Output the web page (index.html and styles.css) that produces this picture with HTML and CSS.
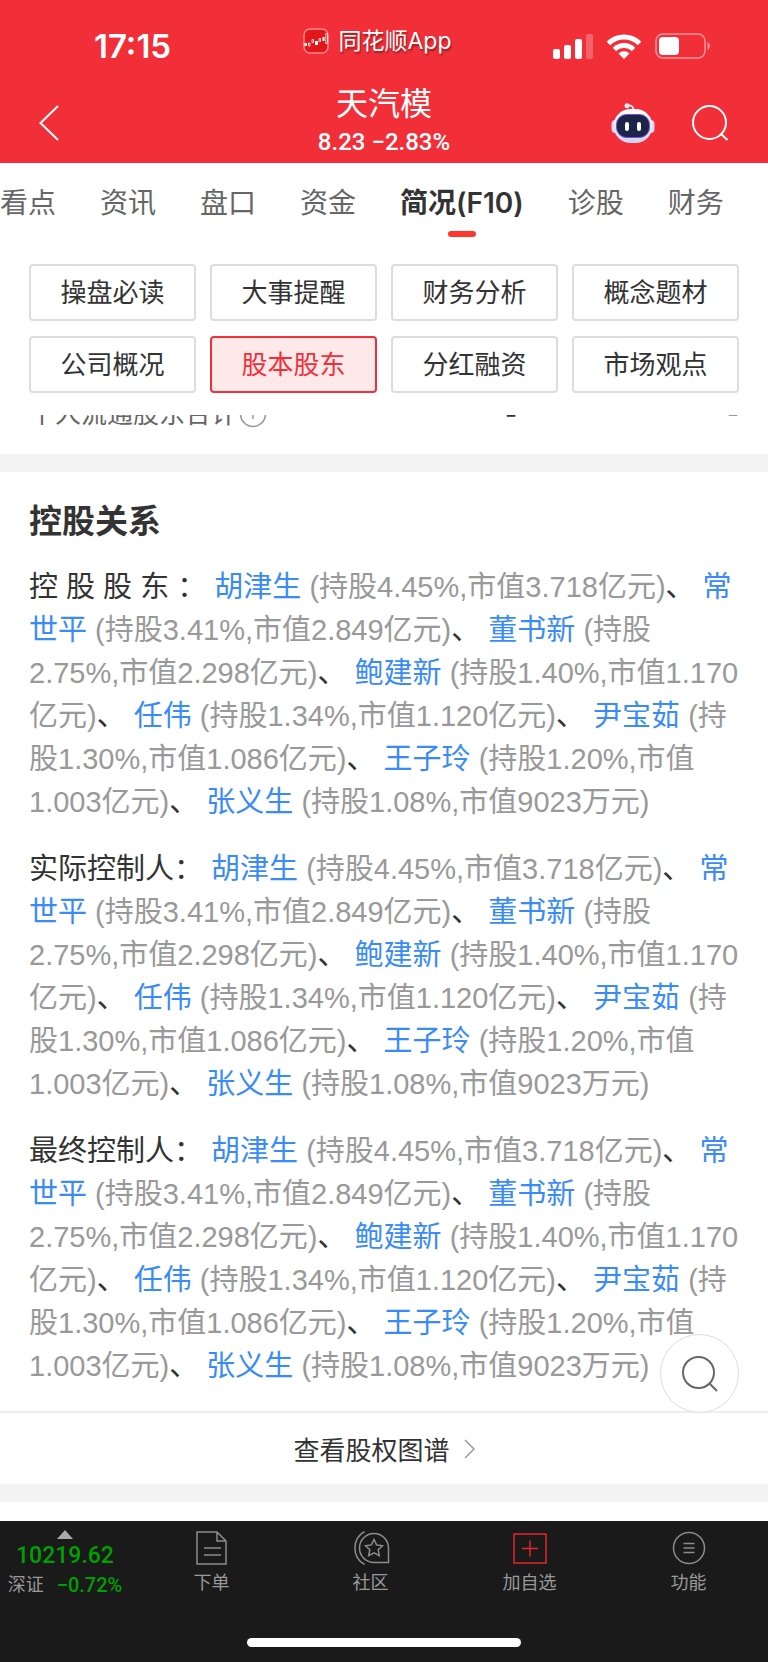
FILE: index.html
```
<!DOCTYPE html>
<html lang="zh-CN">
<head>
  <meta charset="UTF-8" />
  <meta name="viewport" content="width=device-width, initial-scale=1.0" />
  <title>天汽模 - 简况(F10)</title>
  <link rel="stylesheet" href="styles.css">
</head>
<body>
  <header class="header">
    <div class="status-bar">
      <span class="time">17:15</span>
      <div class="app-name">
        <svg class="app-logo" width="26" height="26" viewBox="0 0 26 26">
          <rect x="1" y="1" width="24" height="24" rx="6" fill="#e3171b" stroke="#f98a8c" stroke-width="1.5" />
          <path d="M1.5 15h2.5v3h-2.5zM12 13h3v4h-3zM19.5 9h2v4h-2z" fill="#fff" />
          <path d="M5.5 15h1.5v3h-1.5zM9 11.5h1.5v3h-1.5zM16 10.5h1.5v3h-1.5zM22.8 5.5h1.7v10h-1.7z" fill="none" stroke="#fff" stroke-width=".8" />
        </svg>
        <span>同花顺App</span>
      </div>
      <div class="status-icons">
        <svg width="40" height="26" viewBox="0 0 40 26" fill="#fff">
          <rect x="0" y="16" width="7" height="10" rx="2" />
          <rect x="11" y="12" width="7" height="14" rx="2" />
          <rect x="22" y="6" width="7" height="20" rx="2" />
          <rect x="33" y="1" width="7" height="25" rx="2" opacity=".25" />
        </svg>
        <svg width="36" height="26" viewBox="0 0 36 26" fill="none" stroke="#fff" stroke-width="5">
          <path d="M2.5 10.5a22 22 0 0 1 31 0" />
          <path d="M8.5 16.5a13.5 13.5 0 0 1 19 0" />
          <path d="M18 26l-5.5-5.5a7.8 7.8 0 0 1 11 0z" fill="#fff" stroke="none" />
        </svg>
        <svg width="56" height="26" viewBox="0 0 56 26">
          <rect x="1" y="1" width="49" height="24" rx="7" fill="none" stroke="#fff" stroke-width="1.5" opacity=".5" />
          <rect x="4" y="4" width="20" height="18" rx="4" fill="#fff" />
          <path d="M52.5 9a4.5 4.5 0 0 1 0 8z" fill="#fff" opacity=".5" />
        </svg>
      </div>
    </div>
    <div class="title-bar">
      <button class="icon-btn back" aria-label="返回">
        <svg width="20" height="36" viewBox="0 0 20 36" fill="none" stroke="#fff" stroke-width="2">
          <path d="M19 1L1.5 18 19 35" />
        </svg>
      </button>
      <div class="stock">
        <h1>天汽模</h1>
        <p class="quote">8.23 −2.83%</p>
      </div>
      <div class="title-actions">
        <button class="icon-btn" aria-label="智能助手">
          <svg width="44" height="40" viewBox="0 0 44 40">
            <defs>
              <linearGradient id="shell" x1="0" y1="0" x2="0" y2="1">
                <stop offset="0" stop-color="#fff" />
                <stop offset="1" stop-color="#d4d0f2" />
              </linearGradient>
            </defs>
            <path d="M16 2.5q6-1 6.5 4" fill="none" stroke="#f5e9f5" stroke-width="1.8" />
            <circle cx="16" cy="2.8" r="2.5" fill="#f0e8f8" />
            <rect x="0.5" y="17" width="8" height="13" rx="4" fill="#dcd7f3" />
            <rect x="35.5" y="17" width="8" height="13" rx="4" fill="#dcd7f3" />
            <rect x="2.5" y="6" width="39" height="34" rx="17" fill="url(#shell)" />
            <rect x="5.5" y="11.5" width="33" height="23" rx="10" fill="#1c2448" stroke="#6a55d8" stroke-width="1" />
            <rect x="14" y="19" width="4" height="9" rx="2" fill="#fff" />
            <rect x="26" y="19" width="4" height="9" rx="2" fill="#fff" />
          </svg>
        </button>
        <button class="icon-btn" aria-label="搜索">
          <svg width="38" height="38" viewBox="0 0 38 38" fill="none" stroke="#fff" stroke-width="2">
            <circle cx="18.5" cy="18.5" r="16.5" />
            <path d="M29.5 29.5l7 6.5" />
          </svg>
        </button>
      </div>
    </div>
  </header>

  <nav class="tabs">
    <a href="#">看点</a>
    <a href="#">资讯</a>
    <a href="#">盘口</a>
    <a href="#">资金</a>
    <a href="#" class="active">简况(F10)</a>
    <a href="#">诊股</a>
    <a href="#">财务</a>
  </nav>

  <div class="filters">
    <button>操盘必读</button>
    <button>大事提醒</button>
    <button>财务分析</button>
    <button>概念题材</button>
    <button>公司概况</button>
    <button class="selected">股本股东</button>
    <button>分红融资</button>
    <button>市场观点</button>
  </div>

  <main>
    <!-- last row of the table above, scrolled under the filters -->
    <div class="scrolled">
      <div class="holder-row">
        <span class="holder-name">个人流通股东合计
          <svg width="28" height="28" viewBox="0 0 28 28" fill="none" stroke="#999" stroke-width="1.5">
            <circle cx="14" cy="14" r="12.5" />
            <path d="M14 7v2M14 11v8" />
          </svg>
        </span>
        <span class="holder-count">-</span>
        <span class="holder-ratio">-</span>
      </div>
    </div>

    <section class="relation">
      <h2>控股关系</h2>
      <p>控 股 股 东 ： <a href="#">胡津生</a> <span>(持股4.45%,市值3.718亿元)</span>、 <a href="#">常世平</a> <span>(持股3.41%,市值2.849亿元)</span>、 <a href="#">董书新</a> <span>(持股2.75%,市值2.298亿元)</span>、 <a href="#">鲍建新</a> <span>(持股1.40%,市值1.170亿元)</span>、 <a href="#">任伟</a> <span>(持股1.34%,市值1.120亿元)</span>、 <a href="#">尹宝茹</a> <span>(持股1.30%,市值1.086亿元)</span>、 <a href="#">王子玲</a> <span>(持股1.20%,市值1.003亿元)</span>、 <a href="#">张义生</a> <span>(持股1.08%,市值9023万元)</span></p>
      <p>实际控制人： <a href="#">胡津生</a> <span>(持股4.45%,市值3.718亿元)</span>、 <a href="#">常世平</a> <span>(持股3.41%,市值2.849亿元)</span>、 <a href="#">董书新</a> <span>(持股2.75%,市值2.298亿元)</span>、 <a href="#">鲍建新</a> <span>(持股1.40%,市值1.170亿元)</span>、 <a href="#">任伟</a> <span>(持股1.34%,市值1.120亿元)</span>、 <a href="#">尹宝茹</a> <span>(持股1.30%,市值1.086亿元)</span>、 <a href="#">王子玲</a> <span>(持股1.20%,市值1.003亿元)</span>、 <a href="#">张义生</a> <span>(持股1.08%,市值9023万元)</span></p>
      <p>最终控制人： <a href="#">胡津生</a> <span>(持股4.45%,市值3.718亿元)</span>、 <a href="#">常世平</a> <span>(持股3.41%,市值2.849亿元)</span>、 <a href="#">董书新</a> <span>(持股2.75%,市值2.298亿元)</span>、 <a href="#">鲍建新</a> <span>(持股1.40%,市值1.170亿元)</span>、 <a href="#">任伟</a> <span>(持股1.34%,市值1.120亿元)</span>、 <a href="#">尹宝茹</a> <span>(持股1.30%,市值1.086亿元)</span>、 <a href="#">王子玲</a> <span>(持股1.20%,市值1.003亿元)</span>、 <a href="#">张义生</a> <span>(持股1.08%,市值9023万元)</span></p>
      <button class="float-search" aria-label="搜索">
        <svg width="36" height="38" viewBox="0 0 36 38" fill="none" stroke="#666" stroke-width="2">
          <circle cx="16.5" cy="17.5" r="15.5" />
          <path d="M27 28l8 8" />
        </svg>
      </button>
    </section>

    <a href="#" class="more">
      查看股权图谱
      <svg width="11" height="20" viewBox="0 0 11 20" fill="none" stroke="#999" stroke-width="1.5">
        <path d="M1 1l9 9-9 9" />
      </svg>
    </a>
  </main>

  <footer class="bottom">
    <div class="bottom-bar">
      <a href="#" class="index">
        <svg width="16" height="9" viewBox="0 0 16 9" fill="#aaa"><path d="M8 0l8 9H0z" /></svg>
        <strong>10219.62</strong>
        <span class="index-change"><span>深证</span><b>−0.72%</b></span>
      </a>
      <nav class="bottom-nav">
        <a href="#">
          <svg width="34" height="34" viewBox="0 0 34 34" fill="none" stroke="#8c8c8c" stroke-width="1.5">
            <path d="M2 1h20l9 9v23H2zM22 1v9h9M9 17h17M9 24h17" />
          </svg>
          下单
        </a>
        <a href="#">
          <svg width="38" height="34" viewBox="0 0 38 34" fill="none" stroke="#8c8c8c" stroke-width="1.5">
            <path d="M22 2.5a14.5 14.5 0 0 0 0 29h14.5V17A14.5 14.5 0 0 0 22 2.5z" />
            <path d="M12.5 .5a19 19 0 0 0 0 33" />
            <path d="M22 8.5l2.6 5.4 5.9.8-4.3 4.1 1.1 5.9-5.3-2.9-5.3 2.9 1.1-5.9-4.3-4.1 5.9-.8z" />
          </svg>
          社区
        </a>
        <a href="#">
          <svg width="34" height="34" viewBox="0 0 34 34" fill="none" stroke="#e8262a" stroke-width="1.5">
            <rect x="1" y="3" width="32" height="29" />
            <path d="M17 9.5v16M9 17.5h16" />
          </svg>
          加自选
        </a>
        <a href="#">
          <svg width="34" height="34" viewBox="0 0 34 34" fill="none" stroke="#8c8c8c" stroke-width="1.5">
            <circle cx="17" cy="17" r="15.5" />
            <path d="M11.5 12.5h11M11.5 17h11M11.5 21.5h11" />
          </svg>
          功能
        </a>
      </nav>
    </div>
    <div class="home-indicator"></div>
  </footer>
</body>
</html>
```
FILE: styles.css
```
* {
  box-sizing: border-box;
}

body {
  font-family: Inter, "Noto Sans CJK SC", sans-serif;
  margin: 0;
  min-height: 100vh;
  display: flex;
  flex-direction: column;
  background: #fff;
  color: #333;
  overflow-x: hidden;
}

a {
  color: inherit;
  text-decoration: none;
}

h1, h2, p {
  margin: 0;
}

button {
  font-family: inherit;
  cursor: pointer;
}

svg {
  display: block;
  flex: none;
}

.header {
  height: 163px;
  background: #f22f38;
  color: #fff;
}

.status-bar {
  display: grid;
  grid-template-columns: 1fr auto 1fr;
  height: 92px;
  padding: 0 57px 0 44px;
  align-items: center;
}

.time {
  padding-left: 50px;
  font-size: 33px;
  font-weight: 600;
}

.app-name {
  display: flex;
  align-items: center;
  gap: 9px;
  padding-bottom: 10px;
  font-size: 23px;
  line-height: 26px;
  text-shadow: 1px 2px 2px rgba(0, 0, 0, 0.4);
}

.status-icons {
  display: flex;
  justify-content: flex-end;
  gap: 13px;
}

.title-bar {
  display: grid;
  grid-template-columns: 1fr auto 1fr;
  align-items: center;
  align-content: center;
  height: 62px;
  padding: 0 39px;
}

.icon-btn {
  padding: 0;
  border: none;
  background: none;
}

.back {
  justify-self: start;
}

.stock {
  text-align: center;
}

.stock h1 {
  font-size: 32px;
  font-weight: 400;
  line-height: 38px;
}

.quote {
  font-family: Roboto, sans-serif;
  font-size: 24px;
  font-weight: 500;
  line-height: 38px;
}

.title-actions {
  display: flex;
  justify-content: flex-end;
  align-items: center;
  gap: 36px;
}

.tabs {
  display: flex;
  gap: 44px;
  height: 101px;
  padding-top: 20px;
  white-space: nowrap;
}

.tabs a {
  position: relative;
  height: 56px;
  font-size: 28px;
  line-height: 40px;
  color: #666;
}

.tabs .active {
  color: #333;
  font-weight: 600;
}

.tabs .active::after {
  content: "";
  position: absolute;
  left: 50%;
  bottom: 2px;
  width: 28px;
  height: 6px;
  margin-left: -14px;
  border-radius: 3px;
  background: #fd3630;
}

.filters {
  display: grid;
  grid-template-columns: repeat(4, 1fr);
  gap: 15px 14px;
  padding: 0 29px 22px;
}

.filters button {
  height: 57px;
  padding: 0 0 4px;
  border: 2px solid #ddd;
  border-radius: 4px;
  background: #fff;
  color: #333;
  font-size: 26px;
}

.filters .selected {
  border-color: #f22f38;
  background: #fde9ea;
  color: #f22f38;
}

main {
  flex: 1;
}

.scrolled {
  display: flex;
  align-items: flex-end;
  height: 39px;
  padding: 0 29px 20px;
  overflow: hidden;
}

.holder-row {
  display: grid;
  grid-template-columns: 11fr 11fr 10fr;
  width: 100%;
  font-size: 26px;
  line-height: 40px;
}

.holder-name {
  display: flex;
  align-items: center;
  gap: 2px;
  color: #666;
  white-space: nowrap;
}

.holder-count,
.holder-ratio {
  text-align: right;
}

.holder-count {
  font-weight: 600;
}

.holder-ratio {
  color: #999;
}

.relation {
  position: relative;
  padding: 24px 29px 23px;
  border-top: 18px solid #f4f4f4;
  border-bottom: 2px solid #eee;
}

.relation h2 {
  margin-bottom: 20px;
  font-size: 33px;
  line-height: 50px;
  font-weight: 600;
}

.relation p {
  margin-bottom: 24px;
  font-family: "Liberation Sans", "Noto Sans CJK SC", sans-serif;
  font-size: 29px;
  line-height: 43px;
}

.relation p:last-of-type {
  margin-bottom: 0;
}

.relation p a {
  color: #398bf7;
}

.relation p span {
  color: #999;
}

.float-search {
  position: absolute;
  right: 29px;
  bottom: -2px;
  display: flex;
  align-items: center;
  justify-content: center;
  width: 79px;
  height: 79px;
  padding: 0;
  border: 1px solid #ddd;
  border-radius: 50%;
  background: #fff;
}

.more {
  display: flex;
  align-items: center;
  justify-content: center;
  gap: 14px;
  height: 89px;
  border-bottom: 18px solid #f4f4f4;
  font-size: 26px;
}

.bottom {
  padding-bottom: 15px;
  background: #1a1a1a;
}

.bottom-bar {
  display: flex;
  height: 117px;
}

.index {
  display: flex;
  flex-direction: column;
  align-items: center;
  width: 132px;
  padding: 9px 2px 0 0;
  font-family: Roboto, "Noto Sans CJK SC", sans-serif;
  color: #999;
}

.index strong {
  font-size: 23px;
  font-weight: 500;
  line-height: 34px;
  color: #009f00;
}

.index-change {
  display: flex;
  align-items: center;
  gap: 13px;
  font-size: 18px;
  line-height: 24px;
}

.index-change b {
  font-size: 20px;
  font-weight: 500;
  color: #009f00;
}

.bottom-nav {
  display: flex;
  flex: 1;
}

.bottom-nav a {
  flex: 1;
  display: flex;
  flex-direction: column;
  align-items: center;
  gap: 5px;
  padding-top: 10px;
  font-size: 18px;
  line-height: 26px;
  color: #999;
}

.home-indicator {
  width: 274px;
  height: 9px;
  margin: 0 auto;
  border-radius: 5px;
  background: #fff;
}
```
